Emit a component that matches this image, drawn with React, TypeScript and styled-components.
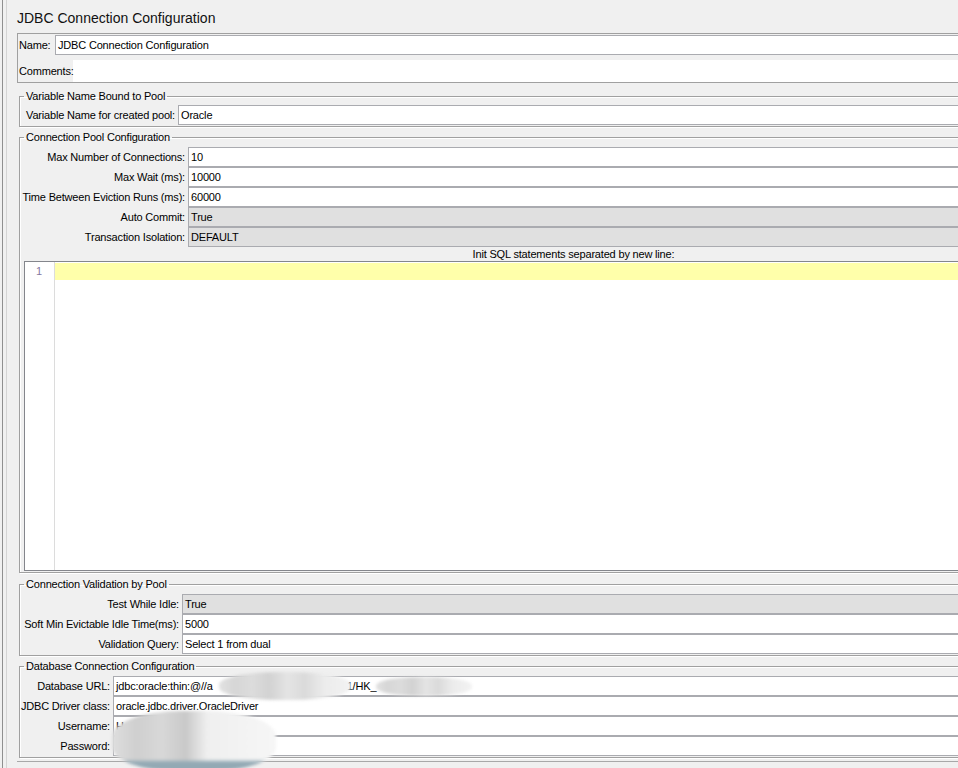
import React from 'react';
import styled, { createGlobalStyle } from 'styled-components';

const Global = createGlobalStyle`
  html, body { margin: 0; padding: 0; background: #f0f0f0; overflow: hidden; }
  body {
    font-family: "Liberation Sans", Arial, sans-serif;
    font-size: 11px;
    letter-spacing: -0.18px;
    color: #000;
  }
`;

const Frame = styled.div`
  margin-left: 2px;
  border-left: 1px solid #8f8f8f;
  height: 768px;
  display: flex;
`;

const Inner = styled.div`
  margin-left: 3px;
  border-left: 1px solid #d4d4d4;
  padding-left: 10px;
  display: flex;
  flex-direction: column;
  width: 1113px;
  flex: none;
`;

const Title = styled.div`
  height: 30px;
  padding-top: 3px;
  line-height: 31px;
  font-size: 14px;
  letter-spacing: 0;
  color: #111;
`;

const NameBox = styled.div`
  border: 1px solid #a0a0a0;
  padding: 0 1px;
  display: flex;
  flex-direction: column;
`;

const NameRow = styled.div<{ $labelW: number; $h: number; $mt: number }>`
  display: grid;
  grid-template-columns: ${p => p.$labelW}px 1fr;
  height: ${p => p.$h}px;
  margin-top: ${p => p.$mt}px;
  align-items: center;
`;

const Label = styled.div<{ $right?: boolean }>`
  position: relative;
  z-index: 1;
  display: flex;
  justify-content: ${p => (p.$right ? 'flex-end' : 'flex-start')};
  white-space: nowrap;
  line-height: 13px;
`;

const Field = styled.div<{ $gray?: boolean; $border?: boolean }>`
  position: relative;
  box-sizing: border-box;
  height: 100%;
  background: ${p => (p.$gray ? '#e0e0e0' : '#fff')};
  border: ${p => (p.$border === false ? 'none' : '1px solid #aaabb0')};
  padding-left: 2px;
  display: flex;
  align-items: center;
  white-space: nowrap;
`;

const Group = styled.fieldset<{ $mt: number }>`
  margin: ${p => p.$mt}px 2px 0 2px;
  padding: 0 3px 1px 3px;
  border: 1px solid #a0a0a0;
  box-shadow: inset 1px 1px 0 #fff, 1px 1px 0 #fff;
  min-width: 0;
  position: relative;
`;

const Legend = styled.legend`
  padding: 0 2px;
  margin-left: 1px;
  font-size: 11px;
  line-height: 13px;
`;

const Form = styled.div<{ $labelW: number; $pt: number }>`
  display: grid;
  grid-template-columns: ${p => p.$labelW}px 1fr;
  grid-auto-rows: 20px;
  column-gap: 3px;
  align-items: center;
  padding-top: ${p => p.$pt}px;
`;

const InitLabel = styled.div`
  height: 14px;
  line-height: 14px;
  text-align: center;
`;

const Editor = styled.div`
  margin-left: 1px;
  height: 310px;
  box-sizing: border-box;
  border: 1px solid #84868c;
  background: #fff;
  display: flex;
`;

const Gutter = styled.div`
  width: 29px;
  border-right: 1px solid #dcdcdc;
  padding-top: 1px;
  display: flex;
  justify-content: flex-start;
`;

const LineNo = styled.div`
  height: 17px;
  line-height: 17px;
  color: #8478a0;
  font-size: 11px;
  padding-left: 11px;
`;

const Code = styled.div`
  flex: 1;
  padding-top: 1px;
`;

const CurrentLine = styled.div`
  height: 17px;
  background: #ffffaa;
`;

const Gap = styled.span<{ $w: number }>`
  display: inline-block;
  width: ${p => p.$w}px;
`;

const Blob = styled.div<{ $l: number; $t: number; $w: number; $h: number }>`
  position: absolute;
  left: ${p => p.$l}px;
  top: ${p => p.$t}px;
  width: ${p => p.$w}px;
  height: ${p => p.$h}px;
  border-radius: 45%;
  background:
    linear-gradient(90deg,
      #e2e2e2 0%, #d6d6d6 12%, #dcdcdc 25%, #d2d2d2 38%,
      #e4e4e4 52%, #dadada 65%, #ececec 80%, #f2f2f2 100%);
  filter: blur(1.5px);
  z-index: 2;
`;

const BlobBig = styled(Blob)`
  border-radius: 42% 42% 40% 40%;
  background:
    linear-gradient(180deg, transparent 0%, transparent 80%, #93a9b4 86%, #93a9b4 100%),
    linear-gradient(90deg,
      #dedede 0%, #cfcfcf 15%, #d8d8d8 30%, #c9c9c9 45%,
      #efefef 58%, #f3f3f3 80%, #f6f6f6 100%);
`;

const BottomRule = styled.div`
  margin-top: 3px;
  border-top: 1px solid #a8a8a8;
`;

type Row = { label: string; value: React.ReactNode; gray?: boolean };

function FormRows({ rows }: { rows: Row[] }) {
  return (
    <>
      {rows.map(r => (
        <React.Fragment key={r.label}>
          <Label $right>{r.label}</Label>
          <Field $gray={r.gray}>{r.value}</Field>
        </React.Fragment>
      ))}
    </>
  );
}

export default function App() {
  return (
    <>
      <Global />
      <Frame>
        <Inner>
          <Title>JDBC Connection Configuration</Title>
          <NameBox>
            <NameRow $labelW={36} $h={20} $mt={1}>
              <Label>Name:</Label>
              <Field>JDBC Connection Configuration</Field>
            </NameRow>
            <NameRow $labelW={54} $h={22} $mt={5}>
              <Label>Comments:</Label>
              <Field $border={false}></Field>
            </NameRow>
          </NameBox>

          <Group $mt={7}>
            <Legend>Variable Name Bound to Pool</Legend>
            <Form $labelW={152} $pt={2}>
              <FormRows rows={[{ label: 'Variable Name for created pool:', value: 'Oracle' }]} />
            </Form>
          </Group>

          <Group $mt={4}>
            <Legend>Connection Pool Configuration</Legend>
            <Form $labelW={162} $pt={3}>
              <FormRows
                rows={[
                  { label: 'Max Number of Connections:', value: '10' },
                  { label: 'Max Wait (ms):', value: '10000' },
                  { label: 'Time Between Eviction Runs (ms):', value: '60000' },
                  { label: 'Auto Commit:', value: 'True', gray: true },
                  { label: 'Transaction Isolation:', value: 'DEFAULT', gray: true },
                ]}
              />
            </Form>
            <InitLabel>Init SQL statements separated by new line:</InitLabel>
            <Editor>
              <Gutter>
                <LineNo>1</LineNo>
              </Gutter>
              <Code>
                <CurrentLine />
              </Code>
            </Editor>
          </Group>

          <Group $mt={5}>
            <Legend>Connection Validation by Pool</Legend>
            <Form $labelW={156} $pt={3}>
              <FormRows
                rows={[
                  { label: 'Test While Idle:', value: 'True', gray: true },
                  { label: 'Soft Min Evictable Idle Time(ms):', value: '5000' },
                  { label: 'Validation Query:', value: 'Select 1 from dual' },
                ]}
              />
            </Form>
          </Group>

          <Group $mt={4}>
            <Legend>Database Connection Configuration</Legend>
            <Form $labelW={87} $pt={3}>
              <Label $right>Database URL:</Label>
              <Field>
                jdbc:oracle:thin:@//a<Gap $w={134} />1/HK_
                <Blob $l={105} $t={-5} $w={132} $h={28} />
                <Blob $l={262} $t={0} $w={96} $h={19} />
              </Field>
              <Label $right>JDBC Driver class:</Label>
              <Field>oracle.jdbc.driver.OracleDriver</Field>
              <Label $right>Username:</Label>
              <Field>
                H
                <BlobBig $l={-2} $t={-6} $w={164} $h={60} />
              </Field>
              <Label $right>Password:</Label>
              <Field></Field>
            </Form>
          </Group>
          <BottomRule />
        </Inner>
      </Frame>
    </>
  );
}
